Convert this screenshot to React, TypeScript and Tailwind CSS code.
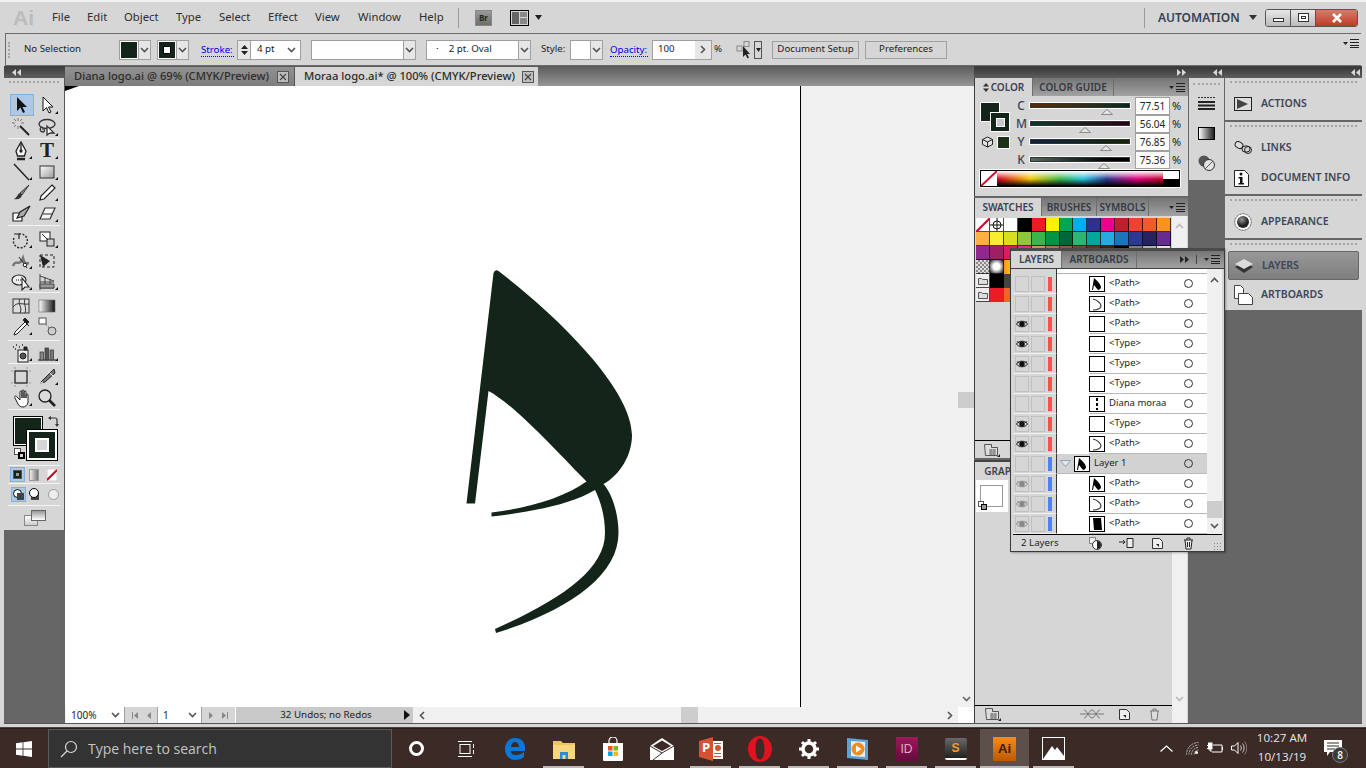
import React from 'react';

const INK = '#132419';
const UI = "font-['Noto_Sans',sans-serif]";

function Chev({ className = '' }: { className?: string }) {
  return (
    <svg width="9" height="6" viewBox="0 0 9 6" className={className}>
      <path d="M1 1l3.5 3.5L8 1" fill="none" stroke="#555" strokeWidth="1.6" />
    </svg>
  );
}

function PanelMenu() {
  return (
    <svg width="16" height="9" viewBox="0 0 16 9">
      <path d="M0 3h5L2.5 6z" fill="#222" />
      <path d="M7 0.5h9M7 3.5h9M7 6.5h9M7 8.5h9" stroke="#222" strokeWidth="1" />
    </svg>
  );
}

function DoubleArrow({ dir }: { dir: 'l' | 'r' }) {
  return (
    <svg width="9" height="7" viewBox="0 0 9 7">
      {dir === 'l' ? (
        <path d="M4 0v7L0 3.5zM9 0v7L5 3.5z" fill="#d8d8d8" />
      ) : (
        <path d="M0 0v7l4-3.5zM5 0v7l4-3.5z" fill="#d8d8d8" />
      )}
    </svg>
  );
}

function Grip({ className = '' }: { className?: string }) {
  return <div className={`h-[2px] border-t-2 border-dotted border-[#a5a5a5] ${className}`} />;
}

/* tool icons */
const toolIcons: Record<string, React.ReactNode> = {
  select: <path d="M6 2v14l3.5-3.5 2.5 5.5 2-1-2.5-5H16z" fill="#111" />,
  direct: <path d="M6 2v14l3.5-3.5 2.5 5.5 2-1-2.5-5H16z" fill="#fff" stroke="#111" />,
  wand: (
    <g stroke="#222" fill="none">
      <path d="M9 9l9 9" strokeWidth="2" />
      <path d="M7 1v3M7 9v3M1 6h3M10 6h3M3 2l2 2M11 2L9 4M3 10l2-2" stroke="#777" />
    </g>
  ),
  lasso: (
    <g fill="none" stroke="#333" strokeWidth="1.3">
      <ellipse cx="10" cy="7" rx="8" ry="4.5" />
      <path d="M4 10c-2 3 0 5 2 5s2-4-1-3" />
      <path d="M10 9v9l3-2 4 0z" fill="#fff" />
    </g>
  ),
  pen: (
    <g fill="none" stroke="#222" strokeWidth="1.3">
      <path d="M10 1L5 10l1.5 5h7L15 10z" fill="#f4f4f4" />
      <path d="M10 2v7" />
      <circle cx="10" cy="10" r="1" fill="#222" />
      <path d="M6 18h8" strokeWidth="2.5" />
    </g>
  ),
  line: <path d="M3 2l15 16" stroke="#222" strokeWidth="1.4" />,
  rect: (
    <>
      <defs>
        <linearGradient id="tg" x1="0" y1="0" x2="1" y2="1">
          <stop offset="0" stopColor="#fff" />
          <stop offset="1" stopColor="#999" />
        </linearGradient>
      </defs>
      <rect x="3" y="4" width="14" height="12" fill="url(#tg)" stroke="#333" />
    </>
  ),
  brush: (
    <g>
      <path d="M18 2L9 10l2 2z" fill="#888" stroke="#222" strokeWidth=".8" />
      <path d="M9 10c-3 1-2 4-6 6 4 1 7 0 8-4z" fill="#333" />
    </g>
  ),
  pencil: (
    <path d="M15 2l3 3L7 16l-4 1 1-4z" fill="#fff" stroke="#222" strokeWidth="1.2" />
  ),
  blob: (
    <g stroke="#222" strokeWidth="1.2">
      <path d="M2 9h9v8H2z" fill="#fff" />
      <path d="M19 2L9 8l-3 6 7-2z" fill="#aaa" />
    </g>
  ),
  eraser: <path d="M8 4h10l-5 11H3z M6 10h10" fill="#f4f4f4" stroke="#333" strokeWidth="1.2" />,
  rotate: (
    <g fill="none" stroke="#222" strokeWidth="1.4">
      <path d="M8 4a7 7 0 1 1-5 4" strokeDasharray="2 1.5" />
      <path d="M3 4h5v5" strokeWidth="1.2" />
    </g>
  ),
  scale: (
    <g stroke="#222" fill="#fff">
      <rect x="3" y="2" width="10" height="9" />
      <rect x="10" y="9" width="7" height="7" fill="#ccc" />
      <path d="M5 4l6 6" />
    </g>
  ),
  warp: (
    <g fill="none">
      <path d="M2 15c3-8 6 2 10-8 1 4 2 6 6 5" stroke="#777" strokeWidth="2.5" />
      <path d="M8 6l8 11" stroke="#222" />
      <circle cx="14" cy="14" r="1.8" fill="#fff" stroke="#222" />
    </g>
  ),
  free: (
    <g>
      <path d="M3 4h14v12H3z" fill="none" stroke="#222" strokeDasharray="3 2" />
      <path d="M3 4l10 6-7 6z" fill="#222" />
    </g>
  ),
  builder: (
    <g stroke="#222" strokeWidth="1.1">
      <ellipse cx="8" cy="8" rx="7" ry="5" fill="#eee" />
      <path d="M5 8h6" strokeDasharray="1 1" />
      <path d="M11 6v12l3-3h4z" fill="#fff" />
    </g>
  ),
  persp: (
    <g stroke="#444" fill="none">
      <path d="M3 2v16M3 4l14 5M3 16h14M3 10h14M8 5v11M13 7v9" />
      <path d="M3 12h14v4H3z" fill="#999" />
    </g>
  ),
  mesh: (
    <g stroke="#333" strokeWidth="1">
      <rect x="2" y="3" width="16" height="14" fill="#ddd" />
      <path d="M2 11c5-6 9-2 16-3M9 3c-3 5 3 8 0 14M14 3c-2 5 2 8 0 14" fill="none" />
    </g>
  ),
  gradient: (
    <>
      <defs>
        <linearGradient id="tg2">
          <stop offset="0" stopColor="#fff" />
          <stop offset="1" stopColor="#111" />
        </linearGradient>
      </defs>
      <rect x="2" y="4" width="16" height="12" fill="url(#tg2)" stroke="#666" strokeWidth=".6" />
    </>
  ),
  dropper: (
    <g stroke="#222">
      <path d="M14 5L4 15l-1 3 3-1L16 7z" fill="#fff" />
      <path d="M12 3l6 6M14 1l4 4-2 2-4-4z" fill="#222" />
    </g>
  ),
  blend: (
    <g stroke="#444" strokeWidth=".9">
      <rect x="2" y="1" width="7" height="6" fill="#fff" />
      <path d="M9 8h2M11 10h2" strokeDasharray="1 1" />
      <circle cx="15" cy="14" r="4" fill="#ccc" />
    </g>
  ),
  spray: (
    <g stroke="#222">
      <path d="M2 4h1M5 2h1M4 6h1M8 4h1M11 2h2" strokeWidth="1.5" strokeDasharray="1 1" />
      <rect x="7" y="7" width="10" height="12" fill="#eee" />
      <circle cx="12" cy="13" r="3" fill="#555" />
      <path d="M13 4h3v3h-3z" fill="#222" />
    </g>
  ),
  graph: (
    <g stroke="#333" strokeWidth=".7">
      <path d="M1 17h18" strokeWidth="1.2" />
      <rect x="3" y="9" width="3.5" height="8" fill="#888" />
      <rect x="8" y="5" width="3.5" height="12" fill="#555" />
      <rect x="13" y="7" width="3.5" height="10" fill="#777" />
    </g>
  ),
  artboard: (
    <g fill="none" stroke="#222">
      <rect x="4" y="4" width="12" height="12" strokeWidth="1.3" />
      <path d="M4 0v2M16 0v2M4 18v2M16 18v2M0 4h2M0 16h2M18 4h2M18 16h2" stroke="#999" />
    </g>
  ),
  slice: (
    <g stroke="#222">
      <path d="M17 2L3 16l5-1 10-9z" fill="#777" />
      <path d="M11 4l5 5M3 16l3-1" stroke="#eee" />
    </g>
  ),
  hand: (
    <path
      d="M4 10L7 16c1 2 3 3 5 3s5-2 5-5V7a1 1 0 0 0-2 0v3-6a1 1 0 0 0-2 0v6-7a1 1 0 0 0-2 0v7-6a1 1 0 0 0-2 0v8L6 9C5 7 3 8 4 10z"
      fill="#fff"
      stroke="#222"
    />
  ),
  zoom: (
    <g fill="none" stroke="#222">
      <circle cx="8" cy="8" r="6" fill="#ddd" strokeWidth="1.3" />
      <path d="M12 12l6 6" strokeWidth="2.6" />
    </g>
  ),
};

function Tool({ icon, fly, active }: { icon: string; fly?: boolean; active?: boolean }) {
  return (
    <div className="relative flex items-center justify-center">
      {active && (
        <div className="absolute left-[2px] top-0 w-[24px] h-[22px] bg-[#abc9e6] border border-[#7fb2e0]" />
      )}
      {icon === 'type' ? (
        <span className="relative font-['Liberation_Serif',serif] text-[21px] font-bold leading-none text-[#222]">T</span>
      ) : (
        <svg width="20" height="20" viewBox="0 0 20 20" className="relative">
          {toolIcons[icon]}
        </svg>
      )}
      {fly && (
        <svg width="3" height="3" viewBox="0 0 3 3" className="absolute right-[2px] bottom-[2px]">
          <path d="M3 0v3H0z" fill="#111" />
        </svg>
      )}
    </div>
  );
}

function ToolGroup({ items, h = 'auto-rows-[21px]' }: { items: [string, boolean?, boolean?][]; h?: string }) {
  return (
    <div className={`grid grid-cols-2 ${h} w-[52px] ml-[4px]`}>
      {items.map(([icon, fly, active]) => (
        <Tool key={icon} icon={icon} fly={fly} active={active} />
      ))}
    </div>
  );
}

function ToolSep({ className = '' }: { className?: string }) {
  return <div className={`h-[1px] bg-[#f4f4f4] mx-[4px] ${className}`} />;
}

function Toolbar() {
  return (
    <div className="w-[61px] shrink-0 flex flex-col bg-[#666]">
      <div className="h-[12px] bg-gradient-to-b from-[#3c3c3c] to-[#5e5e5e] flex items-center pl-[8px]">
        <DoubleArrow dir="l" />
      </div>
      <div className="h-[452px] bg-[#d6d6d6] border-r border-[#555] flex flex-col">
        <Grip className="mt-[3px] mx-[5px]" />
        <div className="h-[11px]" />
        <ToolGroup h="auto-rows-[22px]" items={[['select', false, true], ['direct', true], ['wand'], ['lasso', true]]} />
        <ToolSep />
        <div className="h-[1px]" />
        <ToolGroup items={[['pen', true], ['type', true], ['line', true], ['rect', true], ['brush'], ['pencil', true], ['blob'], ['eraser', true]]} />
        <ToolSep className="mt-[1px]" />
        <div className="h-[3px]" />
        <ToolGroup items={[['rotate', true], ['scale', true], ['warp', true], ['free'], ['builder', true], ['persp', true]]} />
        <ToolSep />
        <div className="h-[2px]" />
        <ToolGroup items={[['mesh'], ['gradient'], ['dropper', true], ['blend']]} />
        <div className="h-[3px]" />
        <ToolSep />
        <div className="h-[1px]" />
        <ToolGroup items={[['spray', true], ['graph', true]]} />
        <ToolSep />
        <div className="h-[2px]" />
        <ToolGroup items={[['artboard'], ['slice', true], ['hand', true], ['zoom']]} />
        <ToolSep className="mt-[1px]" />
        {/* fill and stroke */}
        <div className="relative h-[55px] shrink-0">
          <div className="absolute left-[9px] top-[6px] w-[30px] h-[30px] bg-[#132419] border border-black outline outline-1 outline-white" style={{ outlineOffset: '-2px' }} />
          <div className="absolute left-[23px] top-[20px] w-[30px] h-[30px] bg-[#132419] border-2 border-white outline outline-1 outline-black flex items-center justify-center">
            <div className="w-[14px] h-[14px] border-2 border-white bg-[#d6d6d6]" />
          </div>
          <svg width="12" height="13" viewBox="0 0 12 13" className="absolute left-[43px] top-[5px]">
            <path d="M2 3h6a2 2 0 0 1 2 2v5" fill="none" stroke="#333" strokeWidth="1.2" />
            <path d="M4 1L1 3l3 2zM8 9l2 3 2-3z" fill="#333" />
          </svg>
          <div className="absolute left-[10px] top-[38px] w-[11px] h-[11px]">
            <div className="absolute left-0 top-0 w-[7px] h-[7px] bg-white border border-[#555]" />
            <div className="absolute left-[4px] top-[4px] w-[7px] h-[7px] bg-[#d6d6d6] border-2 border-black" />
          </div>
        </div>
        <ToolSep />
        {/* color, gradient, none */}
        <div className="h-[17px] flex items-center pl-[6px] shrink-0">
          <div className="w-[15px] h-[15px] bg-[#abc9e6] border border-[#7fb2e0] flex items-center justify-center">
            <div className="w-[9px] h-[9px] bg-[#132419] border border-[#555] flex items-center justify-center">
              <div className="w-[3px] h-[3px] bg-[#9a9a9a]" />
            </div>
          </div>
          <div className="ml-[4px] w-[10px] h-[12px] bg-gradient-to-r from-[#eee] to-[#777] border border-[#999]" />
          <svg width="10" height="12" viewBox="0 0 10 12" className="ml-[8px]">
            <rect width="10" height="12" fill="#fff" stroke="#999" strokeWidth=".5" />
            <path d="M0 11L10 1" stroke="#d4002a" strokeWidth="2" />
          </svg>
        </div>
        <ToolSep />
        {/* drawing modes */}
        <div className="h-[21px] flex items-center pl-[7px] shrink-0">
          <div className="w-[15px] h-[15px] bg-[#abc9e6] border border-[#7fb2e0] relative">
            <div className="absolute left-[1px] top-[1px] w-[9px] h-[9px] rounded-full bg-white border border-black" />
            <div className="absolute left-[5px] top-[5px] w-[7px] h-[7px] bg-[#444]" />
          </div>
          <div className="ml-[3px] w-[13px] h-[13px] relative">
            <div className="absolute left-[2px] top-[5px] w-[8px] h-[7px] bg-[#444]" />
            <div className="absolute left-0 top-0 w-[10px] h-[10px] rounded-full bg-white border border-black" />
          </div>
          <div className="ml-[6px] w-[11px] h-[11px] rounded-full bg-[#eee] border border-[#999]" />
        </div>
        <ToolSep />
        <div className="flex-1 relative">
          <div className="absolute left-[20px] top-[9px] w-[14px] h-[11px] bg-gradient-to-b from-[#fff] to-[#ccc] border border-[#888]" />
          <div className="absolute left-[27px] top-[4px] w-[15px] h-[11px] bg-gradient-to-b from-[#999] to-[#fff] border border-[#666]" />
        </div>
      </div>
    </div>
  );
}

function TitleBar() {
  const menus = [
    ['File', 'w-[35px]'],
    ['Edit', 'w-[37px]'],
    ['Object', 'w-[52px]'],
    ['Type', 'w-[43px]'],
    ['Select', 'w-[49px]'],
    ['Effect', 'w-[47px]'],
    ['View', 'w-[43px]'],
    ['Window', 'w-[61px]'],
    ['Help', 'w-[39px]'],
  ];
  return (
    <div className="h-[31px] shrink-0 flex items-center relative">
      <span className="ml-[9px] w-[39px] font-['Liberation_Sans',sans-serif] font-bold text-[21px] leading-none text-[#bcbcbc]">Ai</span>
      {menus.map(([m, w]) => (
        <span key={m} className={`${w} text-[11.3px] text-[#2e2e2e]`}>{m}</span>
      ))}
      <div className="w-[1px] h-[20px] bg-[#9a9a9a]" />
      <div className="ml-[16px] w-[17px] h-[16px] bg-gradient-to-b from-[#9a9a9a] to-[#6e6e6e] text-[8px] font-bold text-[#222] flex items-center justify-center border border-[#888]">Br</div>
      <div className="ml-[18px] w-[19px] h-[16px] border border-black p-[1px] grid grid-cols-2 gap-[1px]">
        <div className="row-span-2 bg-[#666]" />
        <div className="bg-[#888]" />
        <div className="bg-[#888]" />
      </div>
      <svg width="7" height="5" viewBox="0 0 7 5" className="ml-[6px]"><path d="M0 0h7L3.5 5z" fill="#222" /></svg>
      <div className="ml-[602px] w-[1px] h-[20px] bg-[#9a9a9a]" />
      <span className="ml-[13px] w-[84px] text-[12px] font-semibold text-[#38424f] whitespace-nowrap">AUTOMATION</span>
      <svg width="8" height="5" viewBox="0 0 8 5" className="ml-[7px]"><path d="M0 0h8L4 5z" fill="#333" /></svg>
      <div className="ml-[8px] w-[93px] h-[18px] border border-[#555] rounded-[3px] flex overflow-hidden">
        <div className="w-[25px] bg-gradient-to-b from-[#e8e8e8] to-[#bbb] border-r border-[#555] flex items-center justify-center">
          <div className="w-[11px] h-[4px] mt-[5px] bg-white border border-[#333]" />
        </div>
        <div className="w-[25px] bg-gradient-to-b from-[#e8e8e8] to-[#bbb] border-r border-[#555] flex items-center justify-center">
          <div className="w-[11px] h-[9px] bg-white border border-[#333] flex items-center justify-center"><div className="w-[5px] h-[3px] border border-[#333]" /></div>
        </div>
        <div className="flex-1 bg-gradient-to-b from-[#d87a68] to-[#bb3b27] flex items-center justify-center">
          <svg width="12" height="10" viewBox="0 0 12 10"><path d="M2 1l8 8M10 1l-8 8" stroke="#fff" strokeWidth="2.6" /></svg>
        </div>
      </div>
    </div>
  );
}

function Swatch({ w, children }: { w: string; children?: React.ReactNode }) {
  return (
    <div className={`${w} h-[20px] shrink-0 flex border border-[#a0a0a0] bg-white`}>
      <div className="flex-1 flex items-center justify-center">{children}</div>
      <div className="w-[12px] bg-[#e6e6e6] border-l border-[#a0a0a0] flex items-center justify-center"><Chev /></div>
    </div>
  );
}

function ControlBar() {
  return (
    <div className="h-[33px] shrink-0 mx-[1px] border-y border-[#6b6b6b] border-l flex items-center text-[9.7px] text-[#222]">
      <div className="ml-[2px] w-[3px] h-[16px] border-l-2 border-dotted border-[#a5a5a5]" />
      <span className="ml-[13px] w-[95px] shrink-0 whitespace-nowrap">No Selection</span>
      <div className="w-[32px] h-[20px] shrink-0 flex border border-[#a0a0a0]">
        <div className="flex-1 bg-[#132419] border border-white" />
        <div className="w-[12px] bg-[#e6e6e6] border-l border-[#a0a0a0] flex items-center justify-center"><Chev /></div>
      </div>
      <div className="ml-[6px] w-[32px] h-[20px] shrink-0 flex border border-[#a0a0a0]">
        <div className="flex-1 bg-[#132419] border border-white flex items-center justify-center"><div className="w-[8px] h-[8px] bg-white border border-black" /></div>
        <div className="w-[12px] bg-[#e6e6e6] border-l border-[#a0a0a0] flex items-center justify-center"><Chev /></div>
      </div>
      <span className="ml-[12px] w-[33px] shrink-0 text-[#0000d8] border-b border-dotted border-[#0000d8] leading-[13px]">Stroke:</span>
      <div className="ml-[3px] w-[64px] h-[20px] shrink-0 flex border border-[#a0a0a0] bg-white items-center">
        <div className="w-[13px] h-full bg-[#e6e6e6] border-r border-[#a0a0a0] flex flex-col items-center justify-center gap-[2px]">
          <svg width="7" height="4" viewBox="0 0 7 4"><path d="M0 4h7L3.5 0z" fill="#222" /></svg>
          <svg width="7" height="4" viewBox="0 0 7 4"><path d="M0 0h7L3.5 4z" fill="#222" /></svg>
        </div>
        <span className="ml-[6px] w-[30px]">4 pt</span>
        <Chev />
      </div>
      <div className="ml-[10px]"><Swatch w="w-[105px]" /></div>
      <div className="ml-[10px]">
        <Swatch w="w-[105px]"><span className="w-full pl-[9px] whitespace-nowrap">·&nbsp;&nbsp;&nbsp;&nbsp;2 pt. Oval</span></Swatch>
      </div>
      <span className="ml-[10px] w-[29px] shrink-0">Style:</span>
      <Swatch w="w-[33px]" />
      <span className="ml-[7px] w-[38px] shrink-0 text-[#0000d8] border-b border-dotted border-[#0000d8] leading-[13px]">Opacity:</span>
      <div className="ml-[4px] w-[60px] h-[20px] shrink-0 flex border border-[#a0a0a0] bg-white items-center">
        <span className="flex-1 pl-[5px]">100</span>
        <div className="w-[16px] h-full bg-[#e6e6e6] flex items-center justify-center">
          <svg width="6" height="9" viewBox="0 0 6 9"><path d="M1 1l3.5 3.5L1 8" fill="none" stroke="#555" strokeWidth="1.6" /></svg>
        </div>
      </div>
      <span className="ml-[2px] w-[12px] shrink-0">%</span>
      <svg width="17" height="18" viewBox="0 0 17 18" className="ml-[10px]">
        <rect x="1" y="5" width="5" height="5" fill="none" stroke="#888" />
        <rect x="8" y="0.5" width="5" height="5" fill="none" stroke="#888" />
        <path d="M7 5v11l2.5-2.5 2 4 1.5-1-2-3.500H14z" fill="#222" />
      </svg>
      <div className="ml-[1px] w-[8px] h-[18px] border border-[#555] flex items-center justify-center">
        <svg width="5" height="4" viewBox="0 0 5 4"><path d="M0 0h5L2.500 4z" fill="#222" /></svg>
      </div>
      <div className="ml-[10px] w-[87px] h-[18px] border border-[#a0a0a0] flex items-center justify-center whitespace-nowrap">Document Setup</div>
      <div className="ml-[6px] w-[82px] h-[18px] border border-[#a0a0a0] flex items-center justify-center">Preferences</div>
      <div className="ml-auto mr-[2px] self-start mt-[5px]"><PanelMenu /></div>
    </div>
  );
}

function CloseBox() {
  return (
    <div className="w-[12px] h-[12px] border border-[#555] bg-[#bdbdbd] flex items-center justify-center">
      <svg width="8" height="8" viewBox="0 0 8 8"><path d="M1 1l6 6M7 1L1 7" stroke="#444" strokeWidth="1.2" /></svg>
    </div>
  );
}

function Document() {
  return (
    <div className="w-[909px] shrink-0 flex flex-col">
      <div className="h-[20px] shrink-0 flex bg-gradient-to-b from-[#5f5f5f] to-[#969696] border-t border-black/40">
        <div className="w-[230px] bg-gradient-to-b from-[#929292] to-[#7d7d7d] flex items-center pl-[9px] pr-[5px] justify-between text-[11.2px] font-medium text-[#2c2c2c] border-r border-[#555]">
          <span className="whitespace-nowrap">Diana logo.ai @ 69% (CMYK/Preview)</span>
          <CloseBox />
        </div>
        <div className="w-[243px] bg-[#d6d6d6] flex items-center pl-[9px] pr-[4px] justify-between text-[11.2px] font-medium text-[#2c2c2c]">
          <span className="whitespace-nowrap">Moraa logo.ai* @ 100% (CMYK/Preview)</span>
          <CloseBox />
        </div>
      </div>
      <div className="flex-1 flex min-h-0">
        <div className="w-[893px] relative flex bg-white">
          <div className="w-[736px] bg-white border-r border-black" />
          <div className="flex-1 bg-[#f0f0f0]" />
          <svg className="absolute left-0 top-0" width="893" height="621" viewBox="65 86 893 621">
            <path d="M65 86h14l-14 5z" fill="#000" />
            <path
              d="M493.500 273 Q495 269 498.500 271 C560 318 632 390 632 435 C632 455 620 475 603.500 484 C613 495 618.500 515 618.500 533 C618.500 575 570 610 496 633 L495 629 C560 600 605 570 605 533 C605 515 600 500 595 490 C570 505 530 512 491.500 516.500 L491.500 512.500 C530 508 565 497 586.500 481.500 C560 455 515 405 488.500 391 L475 503.500 L466.500 503.500 Z"
              fill={INK}
            />
          </svg>
        </div>
        <div className="w-[16px] bg-[#f0f0f0] flex flex-col items-center relative">
          <div className="h-[306px]" />
          <div className="w-[16px] h-[16px] bg-[#cdcdcd]" />
          <div className="flex-1" />
          <svg width="9" height="6" viewBox="0 0 9 6" className="mb-[5px]"><path d="M1 1l3.500 3.500L8 1" fill="none" stroke="#666" strokeWidth="1.6" /></svg>
        </div>
      </div>
      <div className="h-[16px] shrink-0 flex items-center bg-[#f0f0f0] text-[10px] text-[#222]">
        <div className="ml-[1px] w-[59px] h-full bg-white flex items-center pl-[5px] justify-between pr-[4px] border-r border-[#a0a0a0]">100%<Chev /></div>
        <div className="w-[32px] h-full bg-[#d6d6d6] flex items-center justify-center gap-[9px]">
          <svg width="6" height="7" viewBox="0 0 6 7"><path d="M0 0h1v7H0zM6 0v7L2 3.500z" fill="#888" /></svg>
          <svg width="4" height="7" viewBox="0 0 4 7"><path d="M4 0v7L0 3.500z" fill="#888" /></svg>
        </div>
        <div className="w-[45px] h-full bg-white border-x border-[#a0a0a0] flex items-center pl-[5px] pr-[4px] justify-between">1<Chev /></div>
        <div className="w-[33px] h-full bg-[#d6d6d6] flex items-center justify-center gap-[9px]">
          <svg width="4" height="7" viewBox="0 0 4 7"><path d="M0 0v7l4-3.500z" fill="#888" /></svg>
          <svg width="6" height="7" viewBox="0 0 6 7"><path d="M0 0v7l4-3.500zM5 0h1v7H5z" fill="#888" /></svg>
        </div>
        <div className="w-[178px] h-full bg-[#c9c9c9] flex items-center justify-center relative border-l border-white pl-[3px]">
          <span className="text-[9.8px]">32 Undos; no Redos</span>
          <svg width="6" height="10" viewBox="0 0 6 10" className="absolute right-[3px]"><path d="M0 0v10l6-5z" fill="#111" /></svg>
        </div>
        <div className="flex-1 h-full flex items-center relative">
          <svg width="6" height="9" viewBox="0 0 6 9" className="ml-[6px]"><path d="M5 1L1.500 4.500 5 8" fill="none" stroke="#555" strokeWidth="1.6" /></svg>
          <div className="ml-[256px] w-[17px] h-full bg-[#cdcdcd]" />
          <svg width="6" height="9" viewBox="0 0 6 9" className="ml-auto mr-[5px]"><path d="M1 1l3.500 3.500L1 8" fill="none" stroke="#555" strokeWidth="1.6" /></svg>
        </div>
        <div className="w-[16px] h-full bg-white" />
      </div>
    </div>
  );
}

function Tab({ label, w, active, arrows }: { label: string; w: string; active?: boolean; arrows?: boolean }) {
  return (
    <div
      className={`${w} shrink-0 h-full flex items-center justify-center gap-[2px] text-[10px] font-semibold whitespace-nowrap overflow-hidden border-r border-[#6e6e6e] ${
        active ? 'bg-[#d6d6d6] text-[#3b4250]' : 'text-[#333a44]'
      }`}
    >
      {arrows && (
        <svg width="6" height="9" viewBox="0 0 6 9"><path d="M0 3.500h6L3 0zM0 5.500h6L3 9z" fill="#333" /></svg>
      )}
      {label}
    </div>
  );
}

function TabStrip({ children, right }: { children: React.ReactNode; right?: React.ReactNode }) {
  return (
    <div className="h-[18px] shrink-0 flex items-center bg-gradient-to-b from-[#757575] to-[#a2a2a2]">
      {children}
      <div className="ml-auto mr-[3px] flex items-center">{right}</div>
    </div>
  );
}

const sliders = [
  { l: 'C', v: '77.51', g: 'from-[#5a2d08] to-[#00291f]', pos: 'ml-[72px]' },
  { l: 'M', v: '56.04', g: 'from-[#003a27] to-[#250018]', pos: 'ml-[50px]' },
  { l: 'Y', v: '76.85', g: 'from-[#0c2142] to-[#152600]', pos: 'ml-[71px]' },
  { l: 'K', v: '75.36', g: 'from-[#53705f] to-[#000000]', pos: 'ml-[69px]' },
];

function ColorPanel() {
  return (
    <div className="h-[118px] shrink-0 flex flex-col border-l border-[#3c3c3c]">
      <TabStrip right={<PanelMenu />}>
        <Tab label="COLOR" w="w-[58px]" active arrows />
        <Tab label="COLOR GUIDE" w="w-[81px]" />
      </TabStrip>
      <div className="flex-1 bg-[#d6d6d6] relative pl-[5px] pt-[1px]">
        <div className="flex">
          <div className="relative w-[48px] h-[74px] shrink-0">
            <div className="absolute left-0 top-[5px] w-[20px] h-[20px] bg-[#132419] border border-white" />
            <div className="absolute left-[10px] top-[15px] w-[20px] h-[20px] bg-[#132419] border border-white flex items-center justify-center">
              <div className="w-[9px] h-[9px] bg-[#c9c9c9] border border-white" />
            </div>
            <svg width="11" height="12" viewBox="0 0 11 12" className="absolute left-[2px] top-[39px]">
              <path d="M5.500 1l5 2.500v5L5.500 11 .5 8.500v-5zM.5 3.500l5 2.500 5-2.500M5.500 6v5" fill="#e5e5e5" stroke="#222" />
            </svg>
            <div className="absolute left-[17px] top-[39px] w-[13px] h-[13px] bg-[#1c3316] border border-white" />
          </div>
          <div className="flex flex-col">
            {sliders.map((s) => (
              <div key={s.l} className="h-[18px] flex items-center">
                <span className="w-[10px] -ml-[12px] text-[12px] font-medium text-[#3b4250] text-center">{s.l}</span>
                <div className="ml-[3px] w-[102px] relative h-full">
                  <div className={`mt-[5px] h-[7px] border border-[#fff] outline outline-1 outline-[#333] bg-gradient-to-r ${s.g}`} style={{ outlineOffset: '-2px' }} />
                  <svg width="12" height="6" viewBox="0 0 12 6" className={`${s.pos} block`}>
                    <path d="M.5 5.500h11L6 .5z" fill="#e4e4e4" stroke="#8a8a8a" />
                  </svg>
                </div>
                <div className="ml-[4px] w-[35px] h-[18px] bg-white border border-[#a0a0a0] text-[10px] text-[#222] flex items-center justify-center">{s.v}</div>
                <span className="ml-[2px] text-[11px] text-[#222]">%</span>
              </div>
            ))}
          </div>
        </div>
        <div className="mt-[2px] w-[200px] h-[17px] border border-black flex -translate-y-[3px] overflow-hidden outline outline-1 outline-white">
          <svg width="16" height="15" viewBox="0 0 16 15" className="shrink-0 bg-white">
            <path d="M0 15L16 0" stroke="#d4002a" strokeWidth="2" />
          </svg>
          <div className="flex-1 relative bg-[linear-gradient(90deg,#d4002a,#f5c800_20%,#39b54a_38%,#27c4e0_52%,#2b3990_66%,#e6007e_84%,#c0002a)]">
            <div className="absolute inset-x-0 top-0 h-1/2 bg-gradient-to-b from-white to-white/0" />
            <div className="absolute inset-x-0 bottom-0 h-1/2 bg-gradient-to-t from-black to-black/0" />
          </div>
          <div className="w-[16px] shrink-0 flex flex-col">
            <div className="h-1/2 bg-white" />
            <div className="h-1/2 bg-black" />
          </div>
        </div>
      </div>
    </div>
  );
}

const swatchRows: string[][] = [
  ['', '', '#ffffff', '#000000', '#ed1c24', '#fff200', '#00a651', '#00aeef', '#2e3192', '#ec008c', '#be1e2d', '#ef4136', '#f15a29', '#f7941d'],
  ['#fbb040', '#f9ed32', '#d7df23', '#8dc63f', '#39b54a', '#009444', '#006838', '#2bb673', '#00a79d', '#27aae1', '#1c75bc', '#2b3990', '#262262', '#662d91'],
  ['#92278f', '#9e1f63', '#da1c5c', '#ee2a7b', '#c49a6c', '#a97c50', '#8b5e3c', '#754c29', '#603913', '#3c2415', '#000000', '#808080', '#b3b3b3', '#e6e6e6'],
];

function SwatchesPanel() {
  return (
    <div className="h-[260px] shrink-0 flex flex-col border-l border-[#3c3c3c]">
      <TabStrip right={<PanelMenu />}>
        <Tab label="SWATCHES" w="w-[67px]" active />
        <Tab label="BRUSHES" w="w-[55px]" />
        <Tab label="SYMBOLS" w="w-[52px]" />
      </TabStrip>
      <div className="flex-1 bg-[#d6d6d6] flex flex-col">
        <div className="flex-1 flex min-h-0">
          <div className="w-[197px] pl-[1px] pt-[2px] border-r border-black/0">
            {swatchRows.map((row, r) => (
              <div key={r} className="flex">
                {row.map((c, i) => (
                  <div key={i} className="w-[14px] h-[14px] border-r border-b border-black/70 bg-white overflow-hidden" style={c ? { background: c } : undefined}>
                    {r === 0 && i === 0 && (
                      <svg width="14" height="14" viewBox="0 0 14 14"><path d="M0 14L14 0" stroke="#d4002a" strokeWidth="2" /></svg>
                    )}
                    {r === 0 && i === 1 && (
                      <svg width="14" height="14" viewBox="0 0 14 14" fill="none" stroke="#111"><circle cx="7" cy="7" r="4" /><path d="M7 0v14M0 7h14" /></svg>
                    )}
                  </div>
                ))}
              </div>
            ))}
            <div className="flex">
              <div className="w-[14px] h-[14px] bg-[repeating-conic-gradient(#888_0%_25%,#ddd_0%_50%)] bg-[length:4px_4px] border-r border-b border-black/70" />
              <div className="w-[14px] h-[14px] bg-[radial-gradient(circle,#fff_35%,#111)] border-r border-b border-black/70" />
              <div className="w-[14px] h-[14px] bg-gradient-to-r from-[#f7941d] to-[#fff200]" />
            </div>
            {['#000000', '#ed1c24'].map((c, i) => (
              <div key={c} className="flex">
                <div className="w-[14px] h-[14px] bg-[#eee] flex items-center justify-center border-r border-b border-black/70">
                  <svg width="10" height="8" viewBox="0 0 10 8"><path d="M.5 7.500v-6h3l1 1h5v5z" fill="#ddd" stroke="#555" /></svg>
                </div>
                <div className="w-[14px] h-[14px]" style={{ background: c }} />
                <div className="w-[14px] h-[14px]" style={{ background: i ? '#f26522' : '#444' }} />
              </div>
            ))}
          </div>
          <div className="w-[15px] bg-[#f0f0f0] flex justify-center pt-[7px]">
            <svg width="9" height="6" viewBox="0 0 9 6"><path d="M1 5l3.500-3.500L8 5" fill="none" stroke="#bbb" strokeWidth="1.6" /></svg>
          </div>
        </div>
        <div className="h-[18px] shrink-0 border-t border-black pl-[8px] flex items-center">
          <LibIcon />
        </div>
      </div>
    </div>
  );
}

function LibIcon() {
  return (
    <svg width="17" height="14" viewBox="0 0 17 14">
      <path d="M1.500 1.500h7v3h6v8h-12z" fill="#ddd" stroke="#555" />
      <path d="M6 7h7M6 9h7M6 11h7M8 6v6M11 6v6" stroke="#777" />
      <path d="M17 14v-3l-3 3z" fill="#222" />
    </svg>
  );
}

function GraphicStyles() {
  return (
    <div className="flex-1 flex flex-col border-l border-[#3c3c3c] border-t-2 border-t-[#444] min-h-0">
      <div className="h-[18px] shrink-0 bg-gradient-to-b from-[#757575] to-[#a2a2a2] flex items-center">
        <Tab label="GRAPHIC STYLES" w="w-[100px]" active />
      </div>
      <div className="flex-1 bg-[#d6d6d6] flex min-h-0">
        <div className="w-[197px] relative flex flex-col">
          <div className="flex-1">
            <div className="ml-[1px] w-[32px] h-[32px] bg-white relative">
              <div className="absolute left-[4px] top-[5px] w-[23px] h-[22px] border border-[#999]" />
              <div className="absolute left-[2px] bottom-[2px] w-[9px] h-[9px]">
                <div className="absolute left-0 top-0 w-[6px] h-[6px] bg-white border border-[#555]" />
                <div className="absolute left-[3px] top-[3px] w-[6px] h-[6px] bg-[#999] border border-black" />
              </div>
            </div>
          </div>
          <div className="h-[18px] shrink-0 border-t border-black bg-[#d6d6d6] flex items-center pl-[9px] pb-[1px]">
            <LibIcon />
            <svg width="24" height="14" viewBox="0 0 24 14" className="ml-[79px]" fill="none" stroke="#777">
              <path d="M0 7h24M4 3c3 0 5 8 8 8s5-8 8-8M4 11c3 0 5-8 8-8s5 8 8 8" />
            </svg>
            <svg width="11" height="11" viewBox="0 0 11 11" className="ml-[15px]"><path d="M.5.500h7l3 3v7H.5z" fill="#eee" stroke="#333" /><path d="M4 6h3v3z" fill="#222" /></svg>
            <svg width="11" height="13" viewBox="0 0 11 13" className="ml-[19px]" fill="#ddd" stroke="#777"><path d="M1 3h9M2 3l1 9h5l1-9M4 3V1h3v2" /></svg>
          </div>
        </div>
        <div className="w-[15px] bg-[#f0f0f0] flex flex-col items-center justify-end pb-[21px]">
          <svg width="9" height="6" viewBox="0 0 9 6"><path d="M1 1l3.500 3.500L8 1" fill="none" stroke="#bbb" strokeWidth="1.6" /></svg>
        </div>
      </div>
    </div>
  );
}

function Eye({ dim }: { dim?: boolean }) {
  const c = dim ? '#888' : '#111';
  return (
    <svg width="13" height="10" viewBox="0 0 13 10">
      <path d="M.5 5C3 1 10 1 12.500 5 10 9 3 9 .5 5z" fill="#d6d6d6" stroke={c} />
      <circle cx="6.500" cy="5" r="3" fill={c} />
      <path d="M1 2.500l2 1M12 2.500l-2 1" stroke={c} />
    </svg>
  );
}

function Thumb({ kind }: { kind: string }) {
  return (
    <div className="w-[16px] h-[16px] shrink-0 border border-black bg-white">
      <svg width="14" height="14" viewBox="0 0 14 14">
        {kind === 'leaf' && <path d="M4 1c4 3 7 7 7 9 0 2-2 3-3 3L4 8 3 13 2 13z" fill="#000" />}
        {kind === 'arc' && <path d="M3 2c5 1 8 5 8 7s-3 4-8 4" fill="none" stroke="#333" strokeWidth="1.1" />}
        {kind === 'rect' && <path d="M3 1h8l1 12H4z" fill="#000" />}
        {kind === 'dash' && <path d="M7 1v12" stroke="#000" strokeWidth="2" strokeDasharray="3 2" />}
      </svg>
    </div>
  );
}

function Target({ dim }: { dim?: boolean }) {
  return <div className={`w-[9px] h-[9px] rounded-full border border-[#333] ${dim ? 'bg-[#d0d0d0]' : 'bg-white'}`} />;
}

const layerRows = [
  { label: '<Path>', thumb: 'leaf' },
  { label: '<Path>', thumb: 'arc' },
  { label: '<Path>', thumb: 'none', eye: true },
  { label: '<Type>', thumb: 'none', eye: true },
  { label: '<Type>', thumb: 'none', eye: true },
  { label: '<Type>', thumb: 'none' },
  { label: 'Diana moraa', thumb: 'dash' },
  { label: '<Type>', thumb: 'none', eye: true },
  { label: '<Path>', thumb: 'arc', eye: true },
  { label: 'Layer 1', thumb: 'leaf', layer: true },
  { label: '<Path>', thumb: 'leaf', eye: true, dim: true, blue: true },
  { label: '<Path>', thumb: 'arc', eye: true, dim: true, blue: true },
  { label: '<Path>', thumb: 'rect', eye: true, dim: true, blue: true },
];

function LayersPanel() {
  return (
    <div className="absolute left-[36px] top-[182px] w-[215px] h-[304px] flex flex-col bg-[#d6d6d6] border border-[#3a3a3a] border-t-[3px] border-t-[#4a4a4a] z-10 shadow-[1px_1px_2px_rgba(0,0,0,0.3)]">
      <div className="h-[17px] shrink-0 ml-[1px] flex items-center bg-gradient-to-b from-[#757575] to-[#a2a2a2]">
        <Tab label="LAYERS" w="w-[50px]" active />
        <Tab label="ARTBOARDS" w="w-[75px]" />
        <div className="ml-auto mr-[4px] flex items-center">
          <DoubleArrowDark />
          <div className="mx-[7px] w-[1px] h-[9px] bg-[#444]" />
          <PanelMenu />
        </div>
      </div>
      <div className="flex-1 flex flex-col pl-[2px] pr-[2px] min-h-0 border-t border-black/70">
        <div className="h-[5px] flex">
          <div className="w-[44px] border-r border-[#333] bg-[#d6d6d6]" />
          <div className="w-[150px] bg-white border-b border-[#b0b0b0]" />
          <div className="flex-1 bg-[#eeeeee]" />
        </div>
        <div className="flex">
          <div className="flex-1 flex flex-col">
            {layerRows.map((r, i) => (
              <div key={i} className="h-[20px] flex">
                <div className="w-[44px] shrink-0 flex items-center pl-[2px] gap-[2px] border-r border-[#333] border-b border-b-[#f0f0f0]">
                  <div className="w-[14px] h-[16px] bg-[#d6d6d6] border border-[#c0c0c0] flex items-center justify-center">
                    {r.eye && <Eye dim={r.dim} />}
                  </div>
                  <div className="w-[14px] h-[16px] border border-[#c0c0c0]" />
                  <div className={`w-[4px] h-[14px] ml-[1px] ${r.blue || r.layer ? 'bg-[#5080ff]' : 'bg-[#ff4f4f]'}`} />
                </div>
                {r.layer ? (
                  <div className="flex-1 bg-[#d2d2d2] flex items-center text-[9.500px] text-[#222] border-b border-[#bbb]">
                    <svg width="11" height="7" viewBox="0 0 11 7" className="ml-[3px]"><path d="M.5.500h10L5.500 6.500z" fill="#e8e8e8" stroke="#8aa3bf" /></svg>
                    <span className="ml-[3px]"><Thumb kind={r.thumb} /></span>
                    <span className="ml-[4px] flex-1">{r.label}</span>
                    <Target dim />
                    <span className="w-[14px]" />
                  </div>
                ) : (
                  <div className="flex-1 bg-white flex items-center text-[9.500px] text-[#222]">
                    <div className="w-[32px] h-full" />
                    <div className="flex-1 h-full flex items-center border-b border-[#b8b8b8]">
                      <Thumb kind={r.thumb} />
                      <span className="ml-[4px] flex-1 whitespace-nowrap">{r.label}</span>
                      <Target />
                      <span className="w-[14px]" />
                    </div>
                  </div>
                )}
              </div>
            ))}
          </div>
          <div className="w-[15px] shrink-0 bg-[#f0f0f0] flex flex-col items-center pt-[3px] pb-[5px]">
            <svg width="9" height="6" viewBox="0 0 9 6"><path d="M1 5l3.500-3.500L8 5" fill="none" stroke="#555" strokeWidth="1.6" /></svg>
            <div className="flex-1" />
            <div className="w-[15px] h-[17px] bg-[#cdcdcd] mb-[5px]" />
            <svg width="9" height="6" viewBox="0 0 9 6"><path d="M1 1l3.500 3.500L8 1" fill="none" stroke="#555" strokeWidth="1.6" /></svg>
          </div>
        </div>
        <div className="flex-1 flex items-center text-[9.700px] text-[#222] border-t border-black relative">
          <span className="ml-[8px] w-[68px]">2 Layers</span>
          <svg width="14" height="13" viewBox="0 0 14 13">
            <rect x=".5" y=".5" width="6" height="6" fill="#eee" stroke="#888" />
            <circle cx="8" cy="8" r="4.500" fill="#fff" stroke="#333" />
            <path d="M8 8V4a4 4 0 0 1 0 8z" fill="#222" />
          </svg>
          <svg width="15" height="12" viewBox="0 0 15 12" className="ml-[16px]">
            <path d="M0 5h6M4 3l2 2-2 2" stroke="#222" fill="none" />
            <path d="M8 1.500h6v9H8z" fill="#eee" stroke="#222" />
          </svg>
          <svg width="11" height="11" viewBox="0 0 11 11" className="ml-[18px]"><path d="M.5.500h7l3 3v7H.5z" fill="#eee" stroke="#333" /><path d="M4 6h3v3z" fill="#222" /></svg>
          <svg width="11" height="13" viewBox="0 0 11 13" className="ml-[20px]" fill="#eee" stroke="#222"><path d="M1 3h9M2 3l1 9h5l1-9M4 3V1h3v2M4.500 5v5M6.500 5v5" /></svg>
          <div className="absolute right-[1px] bottom-[1px] w-[8px] h-[8px] bg-[radial-gradient(#888_1px,transparent_1px)] bg-[length:3px_3px]" />
        </div>
      </div>
    </div>
  );
}

function DoubleArrowDark() {
  return (
    <svg width="9" height="7" viewBox="0 0 9 7"><path d="M0 0v7l4-3.500zM5 0v7l4-3.500z" fill="#222" /></svg>
  );
}

function IconDock() {
  return (
    <div className="w-[35px] shrink-0 h-[102px] bg-[#d6d6d6] flex flex-col items-center">
      <Grip className="mt-[5px] w-[27px]" />
      <div className="h-[12px]" />
      <svg width="17" height="13" viewBox="0 0 17 13">
        <path d="M0 .5h17" stroke="#333" strokeDasharray="2 1" />
        <path d="M0 5h17M0 8.500h17" stroke="#222" strokeWidth="2" />
        <path d="M0 12h17" stroke="#222" strokeWidth="2" />
      </svg>
      <div className="h-[17px]" />
      <div className="w-[17px] h-[13px] border border-black bg-gradient-to-r from-white to-[#222]" />
      <div className="h-[15px]" />
      <svg width="17" height="16" viewBox="0 0 17 16">
        <circle cx="6" cy="6" r="5.500" fill="#555" />
        <circle cx="11" cy="10" r="5.500" fill="#e4e4e4" stroke="#333" />
        <path d="M7 14l8-8" stroke="#555" />
      </svg>
    </div>
  );
}

function DockRow({ icon, label, active }: { icon: React.ReactNode; label: string; active?: boolean }) {
  return (
    <div className={`h-[30px] flex items-center pl-[9px] text-[10.500px] font-semibold text-[#3c4656] ${active ? 'mx-[3px] !pl-[6px] h-[29px] rounded-[2px] border border-[#aeaeae] outline outline-1 outline-[#666] bg-gradient-to-b from-[#989898] to-[#7e7e7e]' : ''}`} style={active ? { outlineOffset: '-1px' } : undefined}>
      <div className="w-[27px] flex justify-start">{icon}</div>
      <span className="whitespace-nowrap">{label}</span>
    </div>
  );
}

function DockGroup({ children, className = '' }: { children: React.ReactNode; className?: string }) {
  return (
    <div className={`bg-[#d6d6d6] border-b-2 border-[#666] pt-[3px] flex flex-col ${className}`}>
      <Grip className="mx-[5px]" />
      {children}
    </div>
  );
}

function RightDock() {
  return (
    <div className="w-[137px] shrink-0 flex flex-col">
      <DockGroup className="h-[44px]">
        <div className="h-[6px]" />
        <DockRow label="ACTIONS" icon={
          <svg width="18" height="14" viewBox="0 0 18 14"><rect x=".5" y=".5" width="17" height="13" fill="#ddd" stroke="#222" /><path d="M3 2v10l11-5z" fill="#444" /></svg>
        } />
      </DockGroup>
      <DockGroup className="h-[74px]">
        <div className="h-[6px]" />
        <DockRow label="LINKS" icon={
          <svg width="20" height="14" viewBox="0 0 20 14" fill="none" stroke="#222"><rect x="1" y="1" width="8" height="6" rx="3" transform="rotate(30 5 4)" fill="#ddd" /><rect x="8" y="5" width="8" height="6" rx="3" /><circle cx="14" cy="9" r="3.500" /></svg>
        } />
        <DockRow label="DOCUMENT INFO" icon={
          <svg width="15" height="17" viewBox="0 0 15 17"><path d="M.5.500h10l4 4v12H.5z" fill="#fff" stroke="#222" /><circle cx="7" cy="4" r="1.500" fill="#111" /><path d="M4.500 7h4v6h1.500v1.500H4.500V13H6V8.500H4.500z" fill="#111" /></svg>
        } />
      </DockGroup>
      <DockGroup className="h-[44px]">
        <div className="h-[6px]" />
        <DockRow label="APPEARANCE" icon={
          <svg width="18" height="18" viewBox="0 0 18 18"><circle cx="9" cy="9" r="8.200" fill="#fff" stroke="#444" strokeDasharray="1 .6" /><defs><radialGradient id="ap" cx=".4" cy=".3"><stop offset="0" stopColor="#999" /><stop offset="1" stopColor="#222" /></radialGradient></defs><circle cx="9" cy="9" r="6" fill="url(#ap)" /></svg>
        } />
      </DockGroup>
      <DockGroup className="h-[72px] border-b-0">
        <div className="h-[6px]" />
        <DockRow active label="LAYERS" icon={
          <svg width="18" height="14" viewBox="0 0 18 14"><path d="M0 8l9-5 9 5-9 6z" fill="#333" /><path d="M0 5L9 0l9 5-9 5z" fill="#dcdcdc" /></svg>
        } />
        <DockRow label="ARTBOARDS" icon={
          <svg width="19" height="20" viewBox="0 0 19 20" fill="#fff" stroke="#444"><path d="M.5.500h6l3 3v10H.5z" /><path d="M4.500 8.500h10l4 4v7h-14z" /></svg>
        } />
      </DockGroup>
      <div className="flex-1 bg-[#666]" />
    </div>
  );
}

function Panels() {
  return (
    <div className="w-[388px] shrink-0 flex flex-col bg-[#666] relative">
      <div className="h-[12px] shrink-0 bg-gradient-to-b from-[#383838] to-[#5e5e5e] flex items-center border-t border-black/30">
        <div className="ml-[203px]"><DoubleArrow dir="r" /></div>
        <div className="ml-[27px]"><DoubleArrow dir="l" /></div>
        <div className="ml-[129px]"><DoubleArrow dir="l" /></div>
      </div>
      <div className="flex-1 flex min-h-0">
        <div className="w-[214px] shrink-0 flex flex-col gap-[2px]">
          <ColorPanel />
          <SwatchesPanel />
          <GraphicStyles />
        </div>
        <div className="w-[1px]" />
        <IconDock />
        <div className="w-[1px]" />
        <RightDock />
      </div>
      <LayersPanel />
    </div>
  );
}

/* taskbar */
function TaskIcon({ children, under, active }: { children: React.ReactNode; under?: boolean; active?: boolean }) {
  return (
    <div className={`relative w-[49px] h-full flex items-center justify-center ${active ? 'bg-[#5d504a]' : ''}`}>
      {children}
      {(under || active) && <div className={`absolute bottom-0 h-[2px] bg-[#bdb8b6] ${active ? 'inset-x-0' : 'left-[4px] right-[4px]'}`} />}
    </div>
  );
}

function Taskbar() {
  return (
    <div className="h-[40px] shrink-0 flex items-stretch bg-[#3b2a25] border-t border-[#2a1d19] font-['Open_Sans',sans-serif]">
      <div className="w-[48px] flex items-center justify-center">
        <svg width="16" height="16" viewBox="0 0 16 16" fill="#fff">
          <path d="M0 2.200l6.600-.9v6.300H0zM7.400 1.200L16 0v7.600H7.400zM0 8.400h6.600v6.300L0 13.800zM7.400 8.400H16V16l-8.600-1.200z" />
        </svg>
      </div>
      <div className="w-[344px] bg-[#333] border border-[#5a5a5a] flex items-center pl-[11px]">
        <svg width="18" height="18" viewBox="0 0 18 18" fill="none" stroke="#d8d8d8" strokeWidth="1.200">
          <circle cx="11" cy="7" r="5.500" />
          <path d="M7 11l-6 6" />
        </svg>
        <span className="ml-[10px] text-[14px] text-[#c4c4c4] leading-none">Type here to search</span>
      </div>
      <TaskIcon>
        <div className="w-[15px] h-[15px] rounded-full border-[3px] border-white" />
      </TaskIcon>
      <TaskIcon>
        <svg width="18" height="16" viewBox="0 0 18 16" fill="none" stroke="#fff">
          <rect x="3" y="3.500" width="10" height="9" />
          <path d="M1 .5h14M1 15.500h14M16.500 3v4M16.500 9v4" />
        </svg>
      </TaskIcon>
      <TaskIcon>
        <svg width="22" height="24" viewBox="0 0 22 24">
          <path d="M11 1C4 1 1 7 1 12c0 7 5 11 10 11 4 0 7-1 9-3v-5c-2 2-5 3-8 3-3 0-5-1-5-4h14c1-8-3-13-10-13zM7 10c0-3 2-5 4-5s4 2 4 5z" fill="#0a78d7" />
        </svg>
      </TaskIcon>
      <TaskIcon under>
        <svg width="22" height="20" viewBox="0 0 22 20">
          <path d="M0 2h8l2 2h12v16H0z" fill="#f0c45c" />
          <path d="M0 6h22v14H0z" fill="#f7d77d" />
          <path d="M7 20v-7h8v7h-2.500v-4h-3v4z" fill="#2f8bd0" />
        </svg>
      </TaskIcon>
      <TaskIcon>
        <svg width="22" height="24" viewBox="0 0 22 24">
          <path d="M7 6V4a4 4 0 0 1 8 0v2" fill="none" stroke="#fff" strokeWidth="1.200" />
          <path d="M1 6h20v17a1 1 0 0 1-1 1H2a1 1 0 0 1-1-1z" fill="#fff" />
          <rect x="6" y="9" width="4.500" height="4.500" fill="#f25022" />
          <rect x="11.500" y="9" width="4.500" height="4.500" fill="#7fba00" />
          <rect x="6" y="14.500" width="4.500" height="4.500" fill="#00a4ef" />
          <rect x="11.500" y="14.500" width="4.500" height="4.500" fill="#ffb900" />
        </svg>
      </TaskIcon>
      <TaskIcon>
        <svg width="24" height="22" viewBox="0 0 24 22">
          <path d="M0 8L12 0l12 8v14H0z" fill="#fff" />
          <path d="M3 8l9-5.500L21 8l-9 5z" fill="#3b2a25" />
          <path d="M0 8l12 7 12-7M3 22l9-7" fill="none" stroke="#3b2a25" strokeWidth="1" />
        </svg>
      </TaskIcon>
      <TaskIcon under>
        <svg width="24" height="24" viewBox="0 0 24 24">
          <path d="M0 4l14-4v24L0 20z" fill="#d35230" />
          <path d="M14 4h10v18H14z" fill="#fff" />
          <path d="M15 6h7v1h-7zM15 16h7v1h-7zM15 19h7v1h-7z" fill="#d35230" />
          <circle cx="19" cy="11" r="3" fill="#d35230" />
        </svg>
        <span className="absolute left-[16px] top-[12px] text-[13px] font-bold text-white leading-none">P</span>
      </TaskIcon>
      <TaskIcon under>
        <svg width="24" height="26" viewBox="0 0 24 26">
          <path fillRule="evenodd" d="M12 0c7 0 12 6 12 13s-5 13-12 13S0 20 0 13 5 0 12 0zm0 2.500c-3 0-4.500 5-4.500 10.500S9 23.500 12 23.500 16.500 18.500 16.500 13 15 2.500 12 2.500z" fill="#e0121f" />
        </svg>
      </TaskIcon>
      <TaskIcon under>
        <svg width="20" height="20" viewBox="0 0 20 20">
          <circle cx="10" cy="10" r="6" fill="none" stroke="#fff" strokeWidth="3.500" />
          <path d="M10 0v4M10 16v4M0 10h4M16 10h4M3 3l3 3M14 14l3 3M17 3l-3 3M6 14l-3 3" stroke="#fff" strokeWidth="3" />
        </svg>
      </TaskIcon>
      <TaskIcon under>
        <svg width="21" height="24" viewBox="0 0 21 24">
          <path d="M0 1l21 2v20L0 21z" fill="#59a3d8" />
          <path d="M4 4l14 1v15L4 19z" fill="#e8eef2" />
          <circle cx="11" cy="12" r="6.500" fill="#f28c1e" />
          <path d="M9 8.500v7l5.500-3.500z" fill="#fff" />
        </svg>
      </TaskIcon>
      <TaskIcon under>
        <div className="w-[22px] h-[24px] bg-gradient-to-b from-[#9c1a5e] to-[#650a3c] flex items-center justify-center text-[12px] text-[#e8a8c8] font-['Liberation_Sans',sans-serif]">ID</div>
      </TaskIcon>
      <TaskIcon under>
        <div className="w-[22px] h-[22px] rounded-[2px] bg-gradient-to-b from-[#6a6a6a] to-[#222] border-b-2 border-white flex items-center justify-center text-[12px] font-bold text-[#f39a2e] font-['Liberation_Sans',sans-serif]">S</div>
      </TaskIcon>
      <TaskIcon active>
        <div className="w-[23px] h-[24px] bg-gradient-to-b from-[#f68b1f] to-[#bb5a00] flex items-center justify-center text-[13px] font-bold text-[#3c1d00] font-['Liberation_Sans',sans-serif]">Ai</div>
      </TaskIcon>
      <TaskIcon under>
        <svg width="23" height="23" viewBox="0 0 23 23">
          <rect x=".5" y=".5" width="22" height="22" fill="#3b2a25" stroke="#fff" />
          <path d="M1 22l9-13 3 4 2-3 7 9v3z" fill="#fff" />
        </svg>
      </TaskIcon>
      <div className="flex-1" />
      <svg width="13" height="7" viewBox="0 0 13 7" className="self-center mr-[13px]" fill="none" stroke="#fff" strokeWidth="1.200"><path d="M.5 6.500l6-5.500 6 5.500" /></svg>
      <svg width="13" height="13" viewBox="0 0 13 13" className="self-center mr-[8px]" fill="none" stroke="#bbb">
        <path d="M.5 12.500a12 12 0 0 1 12-12M3 12.500a9.500 9.500 0 0 1 9.500-9.500M5.500 12.500a7 7 0 0 1 7-7M8 12.500a4.500 4.500 0 0 1 4.500-4.500" strokeDasharray="2 .8" />
        <circle cx="10.500" cy="10.500" r="1.500" fill="#fff" stroke="none" />
      </svg>
      <svg width="16" height="13" viewBox="0 0 16 13" className="self-center mr-[8px]" fill="none" stroke="#fff">
        <path d="M0 3.500h3M0 6.500h3" />
        <rect x="1.500" y="1" width="3.500" height="6" fill="#fff" />
        <path d="M3 7v2h2M6 3h9v7H5" />
        <path d="M15.500 5v3" />
      </svg>
      <svg width="16" height="15" viewBox="0 0 16 15" className="self-center mr-[10px]" fill="none" stroke="#fff">
        <path d="M.5 5h3L7 1.500v11L3.500 9h-3z" />
        <path d="M9.500 4.500a4 4 0 0 1 0 5M11.500 2.500a7 7 0 0 1 0 9" stroke="#ccc" />
        <path d="M13.500 .5a10 10 0 0 1 0 13" stroke="#8a7e78" />
      </svg>
      <div className="w-[50px] pb-[3px] flex flex-col items-center justify-center text-[11.6px] text-[#e8e8e8] leading-[19px] whitespace-nowrap">
        <span>10:27 AM</span>
        <span>10/13/19</span>
      </div>
      <div className="relative w-[59px]">
        <svg width="18" height="16" viewBox="0 0 18 16" className="absolute left-[17px] top-[11px]">
          <path d="M0 0h18v12H6l-3 4v-4H0z" fill="#fff" />
          <path d="M3 3h12M3 6h12M3 9h8" stroke="#3b2a25" />
        </svg>
        <div className="absolute left-[25px] top-[18px] w-[16px] h-[16px] rounded-full bg-[#3a3a3a] border border-[#777] flex items-center justify-center text-[10px] text-white font-semibold leading-none">8</div>
      </div>
    </div>
  );
}

export default function App() {
  return (
    <div className={`w-[1366px] h-[768px] flex flex-col overflow-hidden ${UI}`}>
      <div className="h-[728px] shrink-0 bg-[#d6d6d6] border-t-2 border-t-[#f0f0f0] border-b border-b-[#444] px-[4px] pb-[3px] flex flex-col">
        <TitleBar />
        <ControlBar />
        <div className="flex-1 flex min-h-0 border-b border-[#555]">
          <Toolbar />
          <Document />
          <Panels />
        </div>
      </div>
      <Taskbar />
    </div>
  );
}
